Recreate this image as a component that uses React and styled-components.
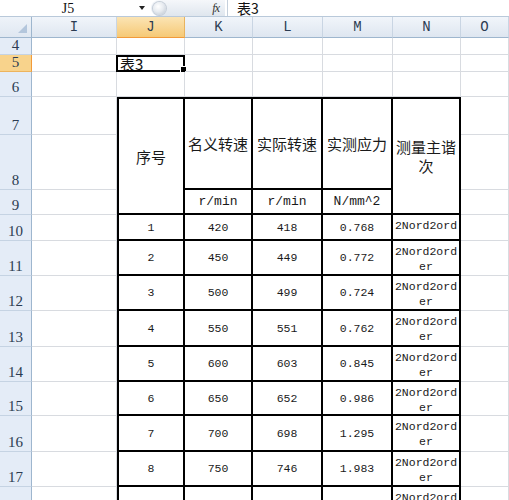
import React from 'react';
import styled, { createGlobalStyle } from 'styled-components';

const GlobalStyle = createGlobalStyle`
  html, body {
    margin: 0;
    padding: 0;
    background: #fff;
    overflow: hidden;
  }
  body {
    width: 509px;
    height: 500px;
    font-family: "Liberation Sans", "Noto Sans CJK SC", sans-serif;
  }
`;

const COLS = ['I', 'J', 'K', 'L', 'M', 'N', 'O'];
const ROWS = [
  [4, 17], [5, 17], [6, 25], [7, 38], [8, 55], [9, 25], [10, 26], [11, 35],
  [12, 35], [13, 36], [14, 35], [15, 34], [16, 36], [17, 35], [18, 35],
];
const DATA = [
  ['1', '420', '418', '0.768'],
  ['2', '450', '449', '0.772'],
  ['3', '500', '499', '0.724'],
  ['4', '550', '551', '0.762'],
  ['5', '600', '603', '0.845'],
  ['6', '650', '652', '0.986'],
  ['7', '700', '698', '1.295'],
  ['8', '750', '746', '1.983'],
  ['', '', '', ''],
];

const Page = styled.div`
  width: 509px;
  height: 500px;
  overflow: hidden;
`;

/* formula bar */
const FormulaBar = styled.div`
  height: 16px;
  display: flex;
  align-items: center;
  background: #fff;
  border-bottom: 1px solid #b9c9da;
  overflow: hidden;
`;

const NameBox = styled.div`
  width: 136px;
  text-align: center;
  font-family: "Liberation Serif", serif;
  font-size: 14px;
  line-height: 16px;
  color: #111;
  padding-top: 1px;
`;

const DropArrow = styled.div`
  width: 0;
  height: 0;
  margin-left: 3px;
  border-left: 3px solid transparent;
  border-right: 3px solid transparent;
  border-top: 4px solid #222;
`;

const FxGroup = styled.div`
  margin-left: 6px;
  width: 74px;
  height: 16px;
  display: flex;
  align-items: center;
  justify-content: space-between;
  border-radius: 8px 0 0 8px;
  background: linear-gradient(#f5f7fa, #dfe6ee);
  box-sizing: border-box;
  padding-right: 6px;
`;

const Knob = styled.div`
  width: 13px;
  height: 13px;
  margin-left: 2px;
  border-radius: 50%;
  background: radial-gradient(circle at 40% 35%, #fff 0, #e7ebf0 45%, #b8c2cd 100%);
  box-shadow: 0 0 0 1px #c6ced8;
`;

const Fx = styled.span`
  font-family: "Liberation Serif", serif;
  font-style: italic;
  font-size: 12px;
  color: #333;
  letter-spacing: -1px;
`;

const Separator = styled.div`
  width: 1px;
  height: 16px;
  margin-left: 2px;
  background: #c4cfdb;
`;

const FormulaText = styled.div`
  margin-left: 9px;
  font-family: "Noto Sans CJK SC", sans-serif;
  font-size: 14px;
  line-height: 16px;
  color: #111;
`;

/* sheet */
const Sheet = styled.div`
  display: grid;
  grid-template-columns: 32px 85px 68px 68px 70px 70px 68px 1fr;
  grid-template-rows: 21px ${ROWS.map(([, h]) => `${h}px`).join(' ')};
`;

const Corner = styled.div`
  grid-row: 1;
  grid-column: 1;
  position: relative;
  box-sizing: border-box;
  background: linear-gradient(#eef3f9, #dfe7f1);
  border-right: 1px solid #9eb6ce;
  border-bottom: 1px solid #9eb6ce;
  svg {
    position: absolute;
    right: 4px;
    bottom: 4px;
  }
`;

const ColHead = styled.div`
  grid-row: 1;
  grid-column: ${p => p.$c};
  box-sizing: border-box;
  display: flex;
  align-items: center;
  justify-content: center;
  font-family: "Liberation Mono", monospace;
  font-size: 14px;
  color: #2c3c52;
  background: ${p => (p.$active ? 'linear-gradient(#fbe4b4, #f6c976)' : 'linear-gradient(#f1f5fa, #dee6f0)')};
  border-right: 1px solid ${p => (p.$active ? '#e8b35e' : '#c9d5e3')};
  border-bottom: 1px solid ${p => (p.$active ? '#f29a3a' : '#9eb6ce')};
`;

const RowHead = styled.div`
  grid-row: ${p => p.$r};
  grid-column: 1;
  box-sizing: border-box;
  display: flex;
  align-items: flex-end;
  justify-content: center;
  font-family: "Liberation Serif", serif;
  font-size: 15px;
  line-height: 16px;
  padding-bottom: 1px;
  color: #2c3c52;
  background: ${p => (p.$active ? '#f8d38c' : '#e4ecf7')};
  border-right: 1px solid ${p => (p.$active ? '#f29a3a' : '#9eb6ce')};
  border-bottom: 1px solid ${p => (p.$active ? '#edb45e' : '#c5d3e3')};
`;

const GridCell = styled.div`
  grid-row: ${p => p.$r};
  grid-column: ${p => p.$c};
  position: relative;
  box-sizing: border-box;
  border-right: 1px solid #d8dbe0;
  border-bottom: 1px solid #d8dbe0;
`;

const CellText = styled.span`
  position: relative;
  display: block;
  padding-left: 3px;
  font-family: "Noto Sans CJK SC", sans-serif;
  font-size: 15px;
  line-height: 17px;
  color: #111;
`;

const Selection = styled.div`
  position: absolute;
  inset: 0 -1px -1px -1px;
  border: 2px solid #000;
  pointer-events: none;
`;

const Handle = styled.div`
  position: absolute;
  right: -4px;
  bottom: -3px;
  width: 5px;
  height: 5px;
  background: #000;
  border: 1px solid #fff;
`;

const TCell = styled.div`
  grid-row: ${p => p.$r} / span ${p => p.$span || 1};
  grid-column: ${p => p.$c};
  box-sizing: border-box;
  display: flex;
  align-items: ${p => (p.$top ? 'flex-start' : 'center')};
  justify-content: center;
  text-align: center;
  overflow: hidden;
  color: #1a1a1a;
  border-right: 2px solid #000;
  border-bottom: 2px solid #000;
  border-left: ${p => (p.$first ? '2px solid #000' : 'none')};
  border-top: ${p => (p.$head ? '2px solid #000' : 'none')};
`;

const Title = styled.div`
  font-family: "Noto Sans CJK SC", sans-serif;
  font-size: 15px;
  line-height: 19px;
  padding: 0 3px;
  word-break: break-all;
`;

const Unit = styled.div`
  font-family: "Liberation Mono", monospace;
  font-size: 13px;
`;

const Num = styled.div`
  font-family: "Liberation Mono", monospace;
  font-size: 11.5px;
`;

const Order = styled.div`
  margin-top: 3px;
  width: 64px;
  max-height: ${p => p.$lines * 15}px;
  overflow: hidden;
  font-family: "Liberation Mono", monospace;
  font-size: 11.5px;
  line-height: 15px;
  word-break: break-all;
`;

const CornerMark = () => (
  <svg width="9" height="9" viewBox="0 0 9 9">
    <path d="M9 0 L9 9 L0 9 Z" fill="#b3c6dc" />
  </svg>
);

const heightOf = r => ROWS.find(([n]) => n === r)[1];
const gridRow = r => r - 2;

const App = () => {
  const cells = [];

  ROWS.forEach(([r]) => {
    COLS.forEach((c, ci) => {
      const col = ci + 2;
      const inTable = r >= 7 && c !== 'I' && c !== 'O';
      if (inTable) return;
      if (r === 5 && c === 'J') {
        cells.push(
          <GridCell key={`${c}${r}`} $r={gridRow(r)} $c={col}>
            <CellText>表3</CellText>
            <Selection>
              <Handle />
            </Selection>
          </GridCell>
        );
        return;
      }
      cells.push(<GridCell key={`${c}${r}`} $r={gridRow(r)} $c={col} />);
    });
  });

  // table header
  cells.push(
    <TCell key="h-j" $r={gridRow(7)} $span={3} $c={3} $first $head>
      <Title>序号</Title>
    </TCell>
  );
  ['名义转速', '实际转速', '实测应力'].forEach((t, i) => {
    cells.push(
      <TCell key={`h-${i}`} $r={gridRow(7)} $span={2} $c={4 + i} $head>
        <Title>{t}</Title>
      </TCell>
    );
  });
  cells.push(
    <TCell key="h-n" $r={gridRow(7)} $span={3} $c={7} $head>
      <Title>测量主谐次</Title>
    </TCell>
  );
  ['r/min', 'r/min', 'N/mm^2'].forEach((u, i) => {
    cells.push(
      <TCell key={`u-${i}`} $r={gridRow(9)} $c={4 + i}>
        <Unit>{u}</Unit>
      </TCell>
    );
  });

  // table body
  DATA.forEach((row, i) => {
    const r = 10 + i;
    const lines = heightOf(r) >= 30 ? 2 : 1;
    row.forEach((v, j) => {
      cells.push(
        <TCell key={`d-${r}-${j}`} $r={gridRow(r)} $c={3 + j} $first={j === 0}>
          <Num>{v}</Num>
        </TCell>
      );
    });
    cells.push(
      <TCell key={`d-${r}-n`} $r={gridRow(r)} $c={7} $top>
        <Order $lines={lines}>2Nord2order</Order>
      </TCell>
    );
  });

  return (
    <Page>
      <GlobalStyle />
      <FormulaBar>
        <NameBox>J5</NameBox>
        <DropArrow />
        <FxGroup>
          <Knob />
          <Fx>fx</Fx>
        </FxGroup>
        <Separator />
        <FormulaText>表3</FormulaText>
      </FormulaBar>
      <Sheet>
        <Corner>
          <CornerMark />
        </Corner>
        {COLS.map((c, i) => (
          <ColHead key={c} $c={i + 2} $active={c === 'J'}>
            {c}
          </ColHead>
        ))}
        {ROWS.map(([r]) => (
          <RowHead key={r} $r={gridRow(r)} $active={r === 5}>
            {r}
          </RowHead>
        ))}
        {cells}
      </Sheet>
    </Page>
  );
};

export default App;
